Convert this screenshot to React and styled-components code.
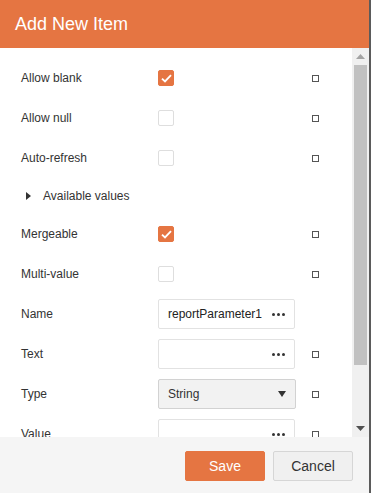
import React from 'react';
import styled, { createGlobalStyle } from 'styled-components';

const orange = '#e57542';

const GlobalStyle = createGlobalStyle`
  html, body {
    margin: 0;
    padding: 0;
    background: #5b5b5b;
    font-family: "Liberation Sans", Arial, sans-serif;
  }
`;

const Dialog = styled.div`
  width: 369px;
  height: 493px;
  display: flex;
  flex-direction: column;
  background: #fff;
`;

const Header = styled.div`
  height: 48px;
  flex: none;
  background: ${orange};
  color: #fff;
  font-size: 18px;
  display: flex;
  align-items: center;
  padding-left: 15px;
  box-sizing: border-box;
`;

const Body = styled.div`
  flex: 1;
  display: flex;
  min-height: 0;
`;

const Content = styled.div`
  flex: 1;
  overflow: hidden;
  padding: 10px 0 0 21px;
  box-sizing: border-box;
`;

const Row = styled.div`
  height: 40px;
  flex: none;
  display: grid;
  grid-template-columns: 137px 137px 17px 7px;
  align-items: center;
  color: #333;
  font-size: 12px;
`;

const Label = styled.div`
  white-space: nowrap;
`;

const Square = styled.div`
  grid-column: 4;
  width: 7px;
  height: 7px;
  box-sizing: border-box;
  border: 1px solid #555;
  background: #fff;
`;

const Check = styled.div`
  width: 16px;
  height: 16px;
  box-sizing: border-box;
  border-radius: 2px;
  border: 1px solid ${(p) => (p.$on ? orange : '#dedede')};
  background: ${(p) => (p.$on ? orange : '#fff')};
  display: flex;
  align-items: center;
  justify-content: center;
`;

const Input = styled.div`
  height: 30px;
  box-sizing: border-box;
  border: 1px solid #e2e2e2;
  border-radius: 2px;
  display: flex;
  align-items: center;
  justify-content: space-between;
  padding: 0 9px 0 9px;
  color: #222;
  font-size: 12px;
`;

const Select = styled(Input)`
  width: 138px;
  background: #f2f2f2;
  border-color: #d2d2d2;
  color: #333;
`;

const Group = styled.div`
  height: 36px;
  display: flex;
  align-items: center;
  font-size: 12px;
  color: #333;
  padding-left: 5px;
  gap: 12px;
`;

const Scrollbar = styled.div`
  width: 17px;
  flex: none;
  background: #f0f0f0;
  display: flex;
  flex-direction: column;
  align-items: center;
`;

const Arrow = styled.div`
  height: 17px;
  width: 17px;
  flex: none;
  display: flex;
  align-items: center;
  justify-content: center;
`;

const Thumb = styled.div`
  width: 13px;
  height: 300px;
  background: #c1c1c1;
  flex: none;
`;

const Spacer = styled.div`
  flex: 1;
`;

const Footer = styled.div`
  height: 56px;
  flex: none;
  background: #f5f5f5;
  display: flex;
  justify-content: flex-end;
  align-items: flex-start;
  padding: 14px 16px 0 0;
  box-sizing: border-box;
  gap: 8px;
`;

const Button = styled.button`
  width: 80px;
  height: 30px;
  border-radius: 2px;
  font-family: inherit;
  font-size: 14px;
  cursor: pointer;
  border: 1px solid ${(p) => (p.$primary ? orange : '#d6d6d6')};
  background: ${(p) => (p.$primary ? orange : '#f0f0f0')};
  color: ${(p) => (p.$primary ? '#fff' : '#333')};
`;

const Tick = () => (
  <svg width="11" height="9" viewBox="0 0 11 9">
    <path d="M1 4.6 L4 7.4 L10 1.2" fill="none" stroke="#fff" strokeWidth="1.9" />
  </svg>
);

const Dots = () => (
  <svg width="13" height="3" viewBox="0 0 13 3">
    <circle cx="1.5" cy="1.5" r="1.5" fill="#333" />
    <circle cx="6.5" cy="1.5" r="1.5" fill="#333" />
    <circle cx="11.5" cy="1.5" r="1.5" fill="#333" />
  </svg>
);

const Tri = ({ dir, color }) => (
  <svg width="9" height="5" viewBox="0 0 9 5">
    <path d={dir === 'up' ? 'M0 5 L4.5 0 L9 5 Z' : 'M0 0 L4.5 5 L9 0 Z'} fill={color} />
  </svg>
);

const CheckRow = ({ label, on }) => (
  <Row>
    <Label>{label}</Label>
    <Check $on={on}>{on && <Tick />}</Check>
    <Square />
  </Row>
);

const InputRow = ({ label, value, square = true }) => (
  <Row>
    <Label>{label}</Label>
    <Input>
      <span>{value}</span>
      <Dots />
    </Input>
    {square && <Square />}
  </Row>
);

export default function App() {
  return (
    <>
      <GlobalStyle />
      <Dialog>
        <Header>Add New Item</Header>
        <Body>
          <Content>
            <CheckRow label="Allow blank" on />
            <CheckRow label="Allow null" />
            <CheckRow label="Auto-refresh" />
            <Group>
              <svg width="5" height="8" viewBox="0 0 5 8">
                <path d="M0 0 L5 4 L0 8 Z" fill="#333" />
              </svg>
              <span>Available values</span>
            </Group>
            <CheckRow label="Mergeable" on />
            <CheckRow label="Multi-value" />
            <InputRow label="Name" value="reportParameter1" square={false} />
            <InputRow label="Text" value="" />
            <Row>
              <Label>Type</Label>
              <Select>
                <span>String</span>
                <svg width="8" height="6" viewBox="0 0 8 6">
                  <path d="M0 0 L4 6 L8 0 Z" fill="#333" />
                </svg>
              </Select>
              <Square />
            </Row>
            <InputRow label="Value" value="" />
          </Content>
          <Scrollbar>
            <Arrow>
              <Tri dir="up" color="#a3a3a3" />
            </Arrow>
            <Thumb />
            <Spacer />
            <Arrow>
              <Tri dir="down" color="#505050" />
            </Arrow>
          </Scrollbar>
        </Body>
        <Footer>
          <Button $primary>Save</Button>
          <Button>Cancel</Button>
        </Footer>
      </Dialog>
    </>
  );
}
